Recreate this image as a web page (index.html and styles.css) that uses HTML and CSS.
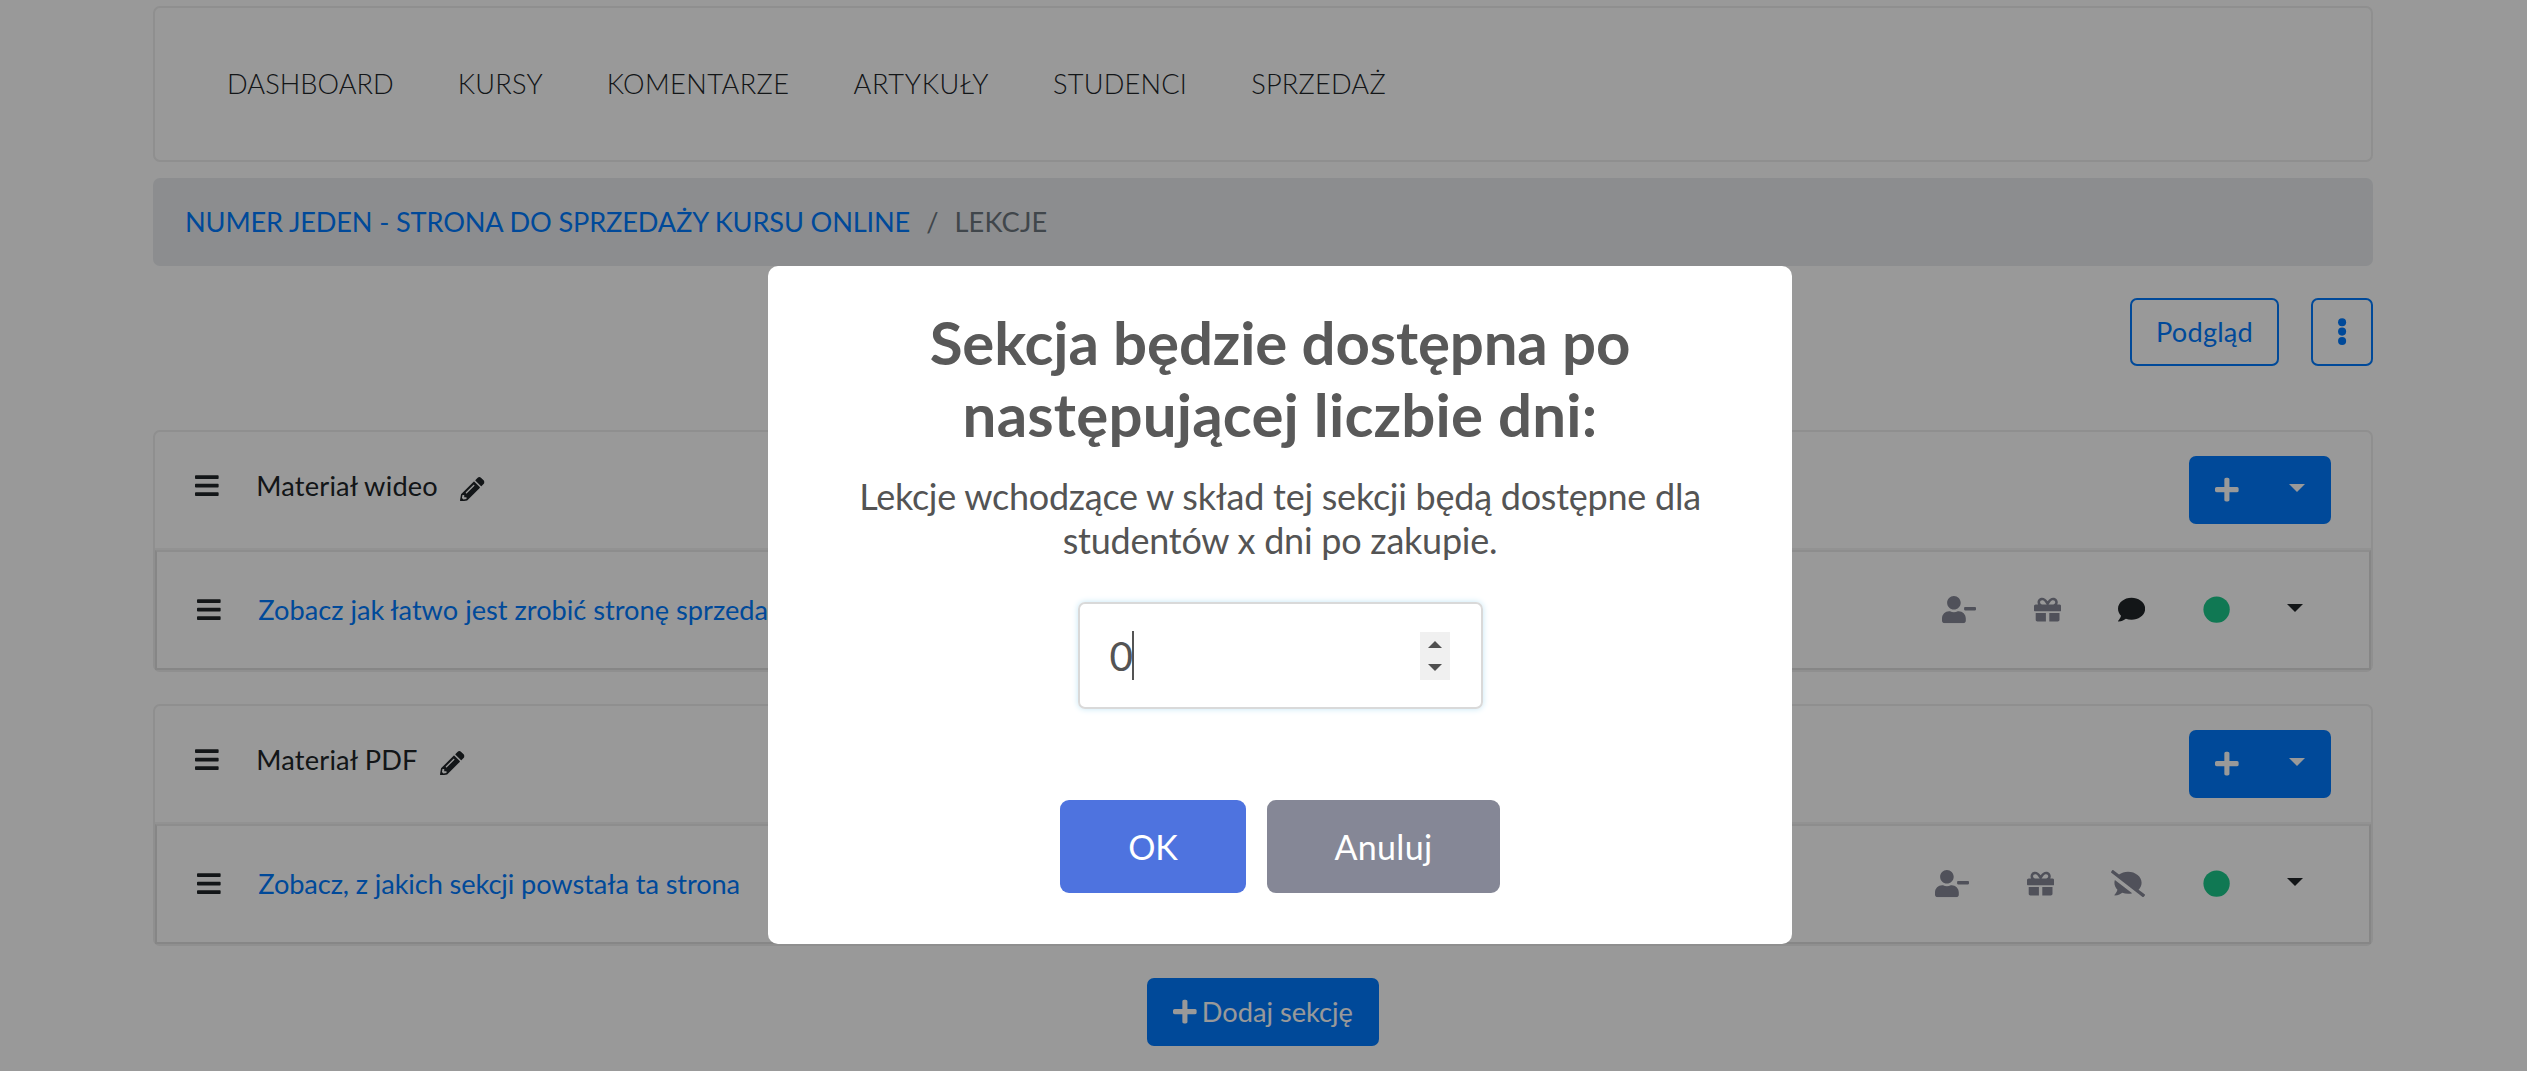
FILE: index.html
```html
<!DOCTYPE html>
<html lang="pl">
<head>
<meta charset="utf-8">
<title>Lekcje</title>
<link rel="stylesheet" href="styles.css">
</head>
<body>
<svg class="sprite" aria-hidden="true">
  <symbol id="bars" viewBox="0 0 448 512"><path d="M16 132h416c8.837 0 16-7.163 16-16V76c0-8.837-7.163-16-16-16H16C7.163 60 0 67.163 0 76v40c0 8.837 7.163 16 16 16zm0 160h416c8.837 0 16-7.163 16-16v-40c0-8.837-7.163-16-16-16H16c-8.837 0-16 7.163-16 16v40c0 8.837 7.163 16 16 16zm0 160h416c8.837 0 16-7.163 16-16v-40c0-8.837-7.163-16-16-16H16c-8.837 0-16 7.163-16 16v40c0 8.837 7.163 16 16 16z"/></symbol>
  <symbol id="pencil" viewBox="0 0 512 512"><path d="M497.9 142.1l-46.1 46.1c-4.7 4.7-12.3 4.7-17 0l-111-111c-4.7-4.7-4.7-12.3 0-17l46.1-46.1c18.7-18.7 49.1-18.7 67.9 0l60.1 60.1c18.8 18.7 18.8 49.1 0 67.9zM284.2 99.8L21.6 362.4.4 483.9c-2.9 16.4 11.4 30.6 27.8 27.8l121.5-21.3 262.6-262.6c4.7-4.7 4.7-12.3 0-17l-111-111c-4.8-4.7-12.4-4.7-17.1 0zM124.1 339.9c-5.5-5.5-5.5-14.3 0-19.8l154-154c5.5-5.5 14.3-5.5 19.8 0s5.5 14.3 0 19.8l-154 154c-5.5 5.5-14.3 5.5-19.8 0zM88 424h48v36.3l-64.5 11.3-31.1-31.1L51.7 376H88v48z"/></symbol>
  <symbol id="user-minus" viewBox="0 0 640 512"><path d="M624 208H432c-8.8 0-16 7.2-16 16v32c0 8.8 7.2 16 16 16h192c8.8 0 16-7.2 16-16v-32c0-8.8-7.2-16-16-16zm-400 48c70.7 0 128-57.3 128-128S294.7 0 224 0 96 57.3 96 128s57.3 128 128 128zm89.6 32h-16.7c-22.2 10.2-46.9 16-72.9 16s-50.6-5.8-72.9-16h-16.7C60.2 288 0 348.2 0 422.4V464c0 26.5 21.5 48 48 48h352c26.5 0 48-21.5 48-48v-41.6c0-74.2-60.2-134.4-134.4-134.4z"/></symbol>
  <symbol id="gift" viewBox="0 0 512 512"><path d="M32 448c0 17.7 14.3 32 32 32h160V320H32v128zm256 32h160c17.7 0 32-14.3 32-32V320H288v160zm192-320h-42.1c6.2-12.1 10.1-25.5 10.1-40 0-48.5-39.5-88-88-88-41.6 0-68.5 21.3-103 68.3-34.5-47-61.4-68.3-103-68.3-48.5 0-88 39.5-88 88 0 14.5 3.8 27.9 10.1 40H32c-17.7 0-32 14.3-32 32v80c0 8.8 7.2 16 16 16h480c8.8 0 16-7.2 16-16v-80c0-17.7-14.3-32-32-32zm-326.1 0c-22.1 0-40-17.9-40-40s17.9-40 40-40c19.9 0 34.6 3.3 86.1 80h-86.1zm206.1 0h-86.1c51.4-76.5 65.7-80 86.1-80 22.1 0 40 17.9 40 40s-17.9 40-40 40z"/></symbol>
  <symbol id="comment" viewBox="0 0 512 512"><path d="M256 32C114.6 32 0 125.1 0 240c0 49.6 21.4 95 57 130.7C44.5 421.1 2.7 466 2.2 466.5c-2.2 2.3-2.8 5.7-1.5 8.7S4.8 480 8 480c66.3 0 116-31.8 140.6-51.4 32.7 12.3 69 19.4 107.4 19.4 141.4 0 256-93.1 256-208S397.4 32 256 32z"/></symbol>
  <symbol id="comment-slash" viewBox="0 0 640 512"><path d="M64 240c0 49.6 21.4 95 57 130.7-12.6 50.3-54.3 95.2-54.8 95.8-2.2 2.3-2.8 5.7-1.5 8.7 1.3 2.9 4.1 4.8 7.3 4.8 66.3 0 116-31.8 140.6-51.4 32.7 12.3 69 19.4 107.4 19.4 27.4 0 53.7-3.6 78.4-10L72.9 186.4c-5.6 17.1-8.9 35-8.9 53.6zm569.8 218.1l-114.4-88.4C554.6 334.1 576 289.2 576 240c0-114.9-114.6-208-256-208-65.1 0-124.2 20.1-169.4 52.7L45.5 3.4C38.5-2 28.5-.8 23 6.2L3.4 31.4c-5.4 7-4.2 17 2.8 22.4l588.4 454.7c7 5.5 17 4.2 22.5-2.8l19.6-25.3c5.4-6.8 4.1-16.9-2.9-22.3z"/></symbol>
  <symbol id="circle" viewBox="0 0 512 512"><circle cx="256" cy="256" r="248"/></symbol>
  <symbol id="plus" viewBox="0 0 448 512"><path d="M416 208H272V64c0-17.67-14.33-32-32-32h-32c-17.67 0-32 14.33-32 32v144H32c-17.67 0-32 14.33-32 32v32c0 17.67 14.33 32 32 32h144v144c0 17.67 14.33 32 32 32h32c17.67 0 32-14.33 32-32V304h144c17.67 0 32-14.33 32-32v-32c0-17.67-14.33-32-32-32z"/></symbol>
  <symbol id="ellipsis" viewBox="0 0 192 512"><circle cx="96" cy="80" r="76"/><circle cx="96" cy="256" r="76"/><circle cx="96" cy="432" r="76"/></symbol>
</svg>

<div class="container">
  <nav class="navbar">
    <a class="tight">DASHBOARD</a><a>KURSY</a><a class="wide">KOMENTARZE</a><a class="wider">ARTYKUŁY</a><a>STUDENCI</a><a>SPRZEDAŻ</a>
  </nav>

  <div class="breadcrumb">
    <a class="crumb-link">NUMER JEDEN - STRONA DO SPRZEDAŻY KURSU ONLINE</a>
    <span>/</span>
    <span class="current">LEKCJE</span>
  </div>

  <div class="toolbar">
    <button class="btn outline preview">Podgląd</button>
    <button class="btn outline more"><svg class="icon w192"><use href="#ellipsis"/></svg></button>
  </div>

  <section class="card">
    <header class="card-header">
      <div class="heading">
        <svg class="icon w448"><use href="#bars"/></svg>
        <span class="name">Materiał wideo</span>
        <svg class="icon edit"><use href="#pencil"/></svg>
      </div>
      <button class="btn primary split"><svg class="icon w448"><use href="#plus"/></svg><i class="caret"></i></button>
    </header>
    <div class="lesson">
      <svg class="icon w448"><use href="#bars"/></svg>
      <a class="title loose">Zobacz jak łatwo jest zrobić stronę sprzedażową</a>
      <div class="actions">
        <svg class="icon w640"><use href="#user-minus"/></svg>
        <svg class="icon"><use href="#gift"/></svg>
        <svg class="icon dark"><use href="#comment"/></svg>
        <svg class="icon green"><use href="#circle"/></svg>
        <i class="caret dark"></i>
      </div>
    </div>
  </section>

  <section class="card">
    <header class="card-header">
      <div class="heading">
        <svg class="icon w448"><use href="#bars"/></svg>
        <span class="name">Materiał PDF</span>
        <svg class="icon edit"><use href="#pencil"/></svg>
      </div>
      <button class="btn primary split"><svg class="icon w448"><use href="#plus"/></svg><i class="caret"></i></button>
    </header>
    <div class="lesson">
      <svg class="icon w448"><use href="#bars"/></svg>
      <a class="title">Zobacz, z jakich sekcji powstała ta strona</a>
      <div class="actions">
        <svg class="icon w640"><use href="#user-minus"/></svg>
        <svg class="icon"><use href="#gift"/></svg>
        <svg class="icon w640"><use href="#comment-slash"/></svg>
        <svg class="icon green"><use href="#circle"/></svg>
        <i class="caret dark"></i>
      </div>
    </div>
  </section>

  <button class="btn primary add"><svg class="icon w448"><use href="#plus"/></svg>Dodaj sekcję</button>
</div>

<div class="backdrop">
  <div class="modal">
    <h2>Sekcja będzie dostępna po<br><span class="second-line">następującej liczbie dni:</span></h2>
    <p>Lekcje wchodzące w skład tej sekcji będą dostępne dla<br>studentów x dni po zakupie.</p>
    <div class="number-input">
      <span class="value">0</span>
      <span class="spinner"><i class="up"></i><i class="down"></i></span>
    </div>
    <div class="modal-actions">
      <button class="confirm">OK</button>
      <button class="cancel">Anuluj</button>
    </div>
  </div>
</div>
</body>
</html>
```
FILE: styles.css
```css
* { box-sizing: border-box; }
html, body { height: 100%; }
body {
  margin: 0;
  overflow: hidden;
  background: #fff;
  color: #212529;
  font: 400 27.2px/40px Lato, sans-serif;
}
button { font: inherit; border: 0; padding: 0; margin: 0; }
.sprite { display: none; }

.container {
  width: 2220px;
  margin-left: 153px;
  padding-top: 6px;
  display: flex;
  flex-direction: column;
}

.icon { width: 27.2px; height: 27.2px; flex: none; fill: currentColor; display: block; }
.w192 { width: 10.2px; }
.w448 { width: 23.8px; }
.w640 { width: 34px; }
.caret {
  width: 0;
  height: 0;
  border: 8px solid transparent;
  border-top-color: currentColor;
  border-bottom: 0;
  margin-bottom: 4px;
}

.navbar {
  height: 156px;
  border: 2px solid #eee;
  border-radius: 7px;
  padding: 0 72px;
  display: flex;
  align-items: center;
  gap: 64px;
  font-weight: 300;
  letter-spacing: .2px;
}
.navbar .tight { letter-spacing: .05px; }
.navbar .wide { letter-spacing: .4px; }
.navbar .wider { letter-spacing: .7px; }

.breadcrumb {
  height: 88px;
  margin-top: 16px;
  padding: 0 32px;
  border-radius: 7px;
  background: #e9ecef;
  color: #6c757d;
  display: flex;
  align-items: center;
  gap: 16px;
}
.crumb-link { color: #007bff; letter-spacing: -.16px; }
.current { letter-spacing: .2px; }

.toolbar { display: flex; justify-content: flex-end; gap: 32px; margin-top: 32px; }
.btn {
  height: 68px;
  border-radius: 7px;
  display: flex;
  align-items: center;
  justify-content: center;
}
.outline { border: 2px solid #007bff; background: transparent; color: #007bff; }
.primary { background: #007bff; color: #fff; }
.preview { width: 149px; letter-spacing: .2px; }
.more { width: 62px; }
.split { width: 142px; padding: 0 26px; justify-content: space-between; }
.add { width: 232px; margin-top: 32px; align-self: center; gap: 5px; }

.card {
  height: 242px;
  margin-top: 32px;
  border: 2px solid #eee;
  border-radius: 7px;
}
.toolbar + .card { margin-top: 64px; }
.card-header {
  height: 118px;
  padding: 0 40px;
  border-bottom: 2px solid #f3f3f3;
  display: flex;
  align-items: center;
  justify-content: space-between;
}
.heading { display: flex; align-items: center; margin-bottom: 8px; }
.name { margin-left: 37.5px; letter-spacing: .2px; }
.edit { width: 24.5px; height: 24.5px; margin: 6px 0 0 22.5px; }

.lesson {
  height: 120px;
  padding: 0 66px 0 40px;
  border: 2px solid #dfdfdf;
  border-top-color: #ebebeb;
  display: flex;
  align-items: center;
}
.title { margin-left: 37.5px; color: #007bff; letter-spacing: -.1px; }
.title.loose { letter-spacing: 0; }
.actions { margin-left: auto; display: flex; align-items: center; gap: 57.3px; color: #858796; }
.dark { color: #212529; }
.green { color: #1cc88a; }

.backdrop {
  position: fixed;
  top: 0;
  left: 0;
  width: 2560px;
  height: 100%;
  padding-top: 266px;
  background: rgba(0, 0, 0, .4);
  display: flex;
  justify-content: center;
  align-items: flex-start;
}
.modal {
  width: 1024px;
  height: 678px;
  padding-top: 40px;
  border-radius: 10px;
  background: #fff;
  display: flex;
  flex-direction: column;
  align-items: center;
  text-align: center;
}
.modal h2 { margin: 0; color: #595959; font-size: 60px; line-height: 72px; font-weight: 700; letter-spacing: -.16px; }
.second-line { letter-spacing: .2px; }
.modal p { margin: 24px 0 0; color: #545454; font-size: 36px; line-height: 44px; letter-spacing: -.25px; }
.number-input {
  width: 405px;
  height: 107px;
  margin-top: 40px;
  padding: 0 31px 0 30px;
  border: 2px solid #d9d9d9;
  border-radius: 7px;
  box-shadow: 0 0 6px #c4e6f5;
  display: flex;
  align-items: center;
  justify-content: space-between;
  color: #545454;
  font-size: 40.5px;
}
.value { width: 24px; height: 49px; line-height: 49px; border-right: 2px solid #545454; }
.spinner {
  width: 30px;
  height: 48px;
  background: #f0f0f0;
  display: flex;
  flex-direction: column;
  align-items: center;
  justify-content: center;
  gap: 16px;
}
.up, .down { border: 7px solid transparent; }
.up { border-top: 0; border-bottom-color: #505050; }
.down { border-bottom: 0; border-top-color: #505050; }
.modal-actions { display: flex; gap: 21px; margin-top: 91px; }
.modal-actions button { height: 93px; border-radius: 9px; color: #fff; font-size: 34px; }
.modal-actions .confirm { width: 186px; background: #4e73df; }
.modal-actions .cancel { width: 233px; background: #858796; letter-spacing: .3px; }
```
